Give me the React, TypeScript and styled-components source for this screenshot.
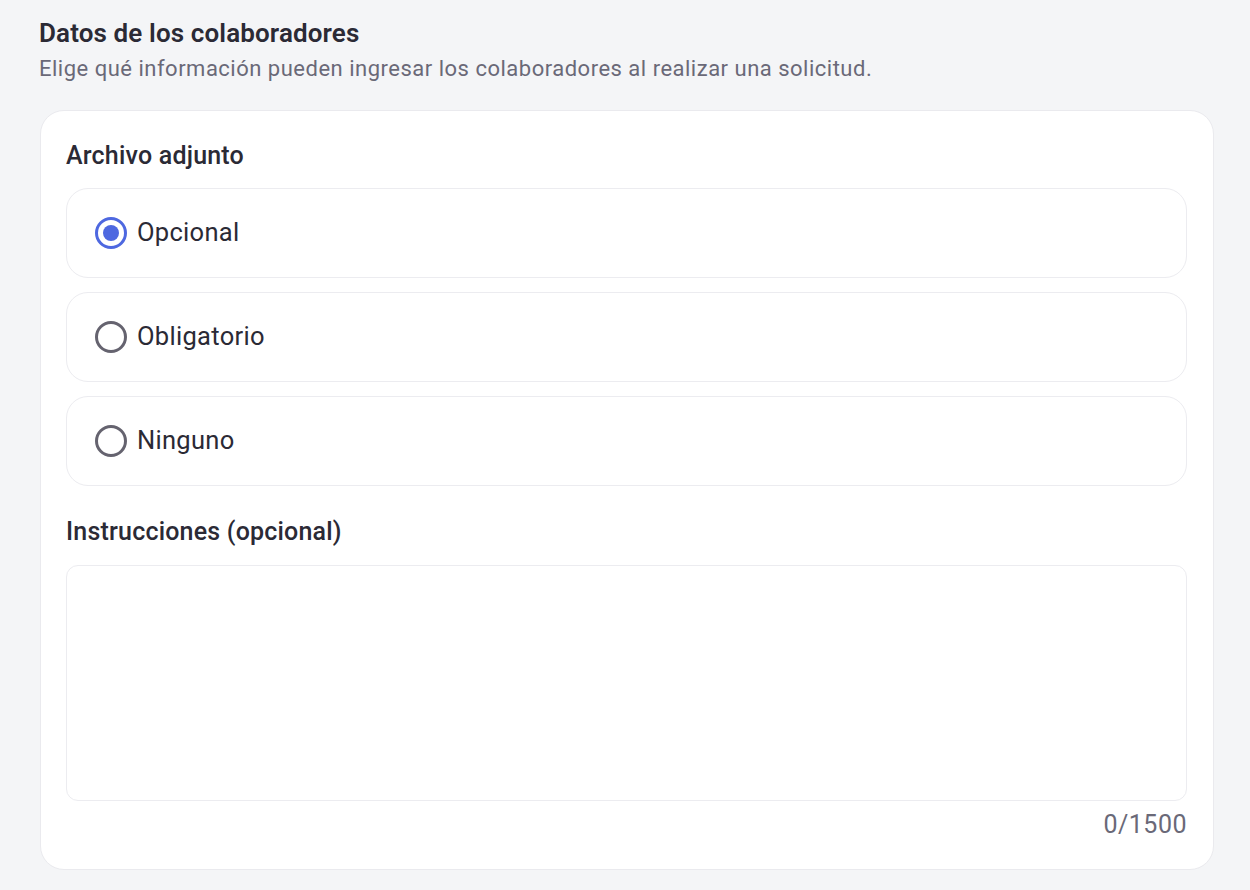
import React, { useState } from "react";
import styled, { createGlobalStyle } from "styled-components";

const GlobalStyle = createGlobalStyle`
    body {
        margin: 0;
        background: #f4f5f7;
        font-family: Roboto, "Liberation Sans", sans-serif;
        color: #2b2a35;
    }
`;

const Page = styled.div`
    padding: 17px 36px 20px 39px;
`;

const Title = styled.h2`
    margin: 0;
    font-size: 26px;
    font-weight: 600;
    line-height: 32px;
    letter-spacing: 0.12px;
    color: #2b2a35;
`;

const Subtitle = styled.p`
    margin: 5px 0 0;
    font-size: 22px;
    line-height: 30px;
    color: #6a6978;
    letter-spacing: 0.5px;
`;

const Card = styled.div`
    margin: 26px 0 0 1px;
    background: #ffffff;
    border: 1px solid #eaeaee;
    border-radius: 24px;
    padding: 29px 26px 29px 25px;
`;

const Label = styled.div`
    font-size: 25px;
    font-weight: 500;
    line-height: 32px;
    letter-spacing: 0.2px;
    color: #2b2a35;
`;

const Options = styled.div`
    display: flex;
    flex-direction: column;
    gap: 14px;
    margin-top: 16px;
`;

const Option = styled.label`
    display: flex;
    align-items: center;
    gap: 10px;
    box-sizing: border-box;
    height: 90px;
    padding: 0 28px 2px;
    border: 1px solid #ececf0;
    border-radius: 22px;
    cursor: pointer;
    font-size: 25.5px;
    color: #2b2a35;
    letter-spacing: 0.3px;
`;

const Radio = styled.span<{ $checked: boolean }>`
    box-sizing: border-box;
    width: 32px;
    height: 32px;
    margin-top: 2px;
    border-radius: 50%;
    border: 3px solid ${(p) => (p.$checked ? "#4e68e0" : "#65636f")};
    display: flex;
    align-items: center;
    justify-content: center;
    flex-shrink: 0;

    &::after {
        content: "";
        width: 16px;
        height: 16px;
        border-radius: 50%;
        background: #4e68e0;
        display: ${(p) => (p.$checked ? "block" : "none")};
    }
`;

const Section = styled.div`
    margin-top: 30px;
`;

const TextArea = styled.textarea`
    display: block;
    box-sizing: border-box;
    width: 100%;
    height: 236px;
    margin-top: 17px;
    border: 1px solid #ececf0;
    border-radius: 12px;
    resize: none;
    outline: none;
    padding: 14px 16px;
    font-family: inherit;
    font-size: 22px;
`;

const Counter = styled.div`
    text-align: right;
    margin-top: 9px;
    font-size: 25px;
    line-height: 30px;
    letter-spacing: 0.5px;
    color: #6a6978;
`;

const options = ["Opcional", "Obligatorio", "Ninguno"];

const App = () => {
    const [selected, setSelected] = useState("Opcional");
    const [text, setText] = useState("");

    return (
        <Page>
            <GlobalStyle />
            <Title>Datos de los colaboradores</Title>
            <Subtitle>
                Elige qué información pueden ingresar los colaboradores al realizar una solicitud.
            </Subtitle>
            <Card>
                <Label>Archivo adjunto</Label>
                <Options>
                    {options.map((o) => (
                        <Option key={o} onClick={() => setSelected(o)}>
                            <Radio $checked={selected === o} />
                            {o}
                        </Option>
                    ))}
                </Options>
                <Section>
                    <Label>Instrucciones (opcional)</Label>
                    <TextArea
                        value={text}
                        maxLength={1500}
                        onChange={(e) => setText(e.target.value)}
                    />
                    <Counter>{text.length}/1500</Counter>
                </Section>
            </Card>
        </Page>
    );
};

export default App;
